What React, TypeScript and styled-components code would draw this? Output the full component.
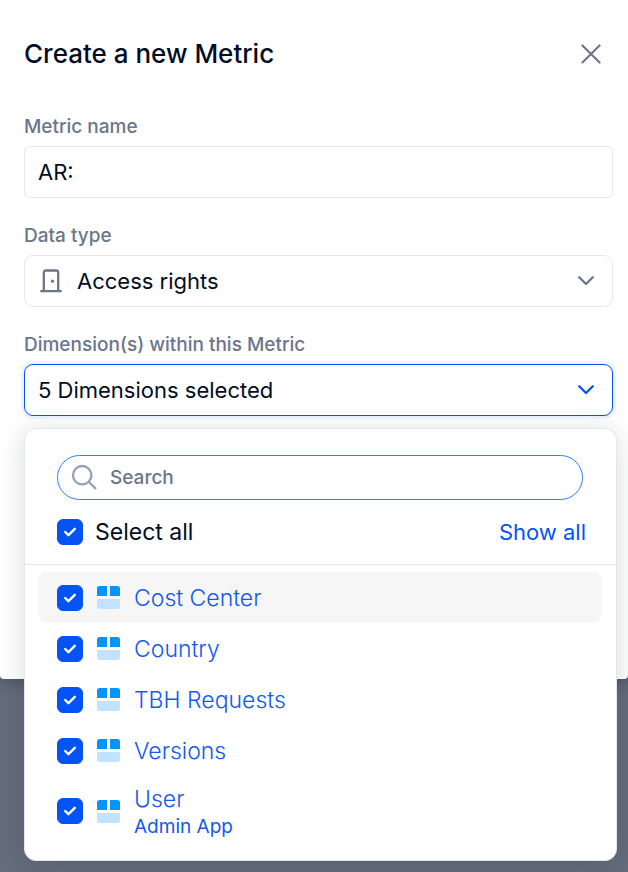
import React, { useState } from "react";
import styled, { createGlobalStyle } from "styled-components";

const color = {
  ink: "#020d24",
  muted: "#6b768a",
  line: "#e6e7ea",
  blue: "#0454f5",
  focus: "#2b84f8",
  link: "#1259ee",
};

const GlobalStyle = createGlobalStyle`
  *, *::before, *::after { box-sizing: border-box; }
  body {
    margin: 0;
    min-height: 100vh;
    background: #656c7b;
    color: ${color.ink};
    font-family: Inter, "Liberation Sans", sans-serif;
  }
  button, input, select { font: inherit; color: inherit; }
`;

const Dialog = styled.main`
  padding: 32px 15px 263px 24px;
  background: #fff;
  border-radius: 0 0 4px 4px;
  box-shadow: 0 4px 14px rgba(20, 28, 48, 0.3);
`;

const Header = styled.header`
  display: flex;
  align-items: center;
  justify-content: space-between;
  height: 44px;
  padding-right: 6px;
  margin-bottom: 39px;
`;

const Title = styled.h1`
  margin: 0;
  font-size: 26px;
  line-height: 32px;
  font-weight: 500;
`;

const IconButton = styled.button`
  display: flex;
  align-items: center;
  justify-content: center;
  width: 32px;
  height: 32px;
  padding: 0;
  border: 0;
  background: none;
  color: ${color.muted};
  cursor: pointer;
`;

const Form = styled.form`
  display: flex;
  flex-direction: column;
  gap: 26px;
`;

const Field = styled.div`
  display: flex;
  flex-direction: column;
  gap: 7px;
`;

const Label = styled.label`
  color: ${color.muted};
  font-size: 19px;
  line-height: 24px;
  font-weight: 500;
`;

const Control = styled.div`
  position: relative;
  display: grid;
  align-items: center;
`;

const TextInput = styled.input`
  width: 100%;
  height: 52px;
  padding: 0 13px;
  border: 1px solid ${color.line};
  border-radius: 5px;
  background: #fff;
  font-size: 22px;
  outline: none;
`;

const Select = styled.select`
  width: 100%;
  height: 52px;
  padding: 0 48px 0 52px;
  border: 1px solid ${color.line};
  border-radius: 9px;
  background: #fff;
  font-size: 22px;
  appearance: none;
`;

const SelectIcon = styled.span<{ $side: "left" | "right" }>`
  position: absolute;
  ${(p) => p.$side}: 14px;
  display: flex;
  color: ${color.muted};
  pointer-events: none;
`;

const Trigger = styled.button`
  display: flex;
  align-items: center;
  justify-content: space-between;
  width: 100%;
  height: 52px;
  padding: 0 13px;
  border: 1px solid ${color.blue};
  border-radius: 9px;
  background: #fff;
  box-shadow: 0 0 0 3px #eef4fe;
  font-size: 22px;
  text-align: left;

  svg { color: ${color.blue}; }
`;

const Panel = styled.section`
  position: absolute;
  top: calc(100% + 12px);
  left: 0;
  right: -4px;
  padding-bottom: 14px;
  border: 1px solid ${color.line};
  border-radius: 12px;
  background: #fff;
  box-shadow: 0 4px 26px rgba(20, 28, 40, 0.16);
`;

const PanelHead = styled.div`
  display: flex;
  flex-direction: column;
  gap: 12px;
  padding: 26px 30px 12px 32px;
  border-bottom: 1px solid ${color.line};
`;

const SearchBox = styled.label`
  display: flex;
  align-items: center;
  gap: 12px;
  height: 45px;
  margin-right: 3px;
  padding: 0 13px;
  border: 1px solid ${color.focus};
  border-radius: 23px;
  color: #97a1b4;
`;

const SearchInput = styled.input`
  flex: 1;
  min-width: 0;
  padding: 0;
  border: 0;
  background: none;
  outline: none;
  color: ${color.ink};
  font-size: 19px;
  line-height: 24px;
  font-weight: 500;

  &::placeholder { color: ${color.muted}; opacity: 1; }
`;

const SelectRow = styled.div`
  display: flex;
  align-items: center;
  justify-content: space-between;
  height: 40px;
`;

const CheckLabel = styled.label`
  display: flex;
  align-items: center;
  gap: 12px;
  font-size: 23px;
  line-height: 28px;
  cursor: pointer;
`;

const ShowAll = styled.button`
  padding: 0;
  border: 0;
  background: none;
  color: ${color.blue};
  font-size: 22px;
  line-height: 28px;
  cursor: pointer;
`;

const Box = styled.span`
  position: relative;
  display: grid;
  flex: none;
  width: 26px;
  height: 26px;

  svg {
    position: absolute;
    inset: 0;
    pointer-events: none;
  }
`;

const BoxInput = styled.input`
  width: 26px;
  height: 26px;
  margin: 0;
  border: 1px solid ${color.blue};
  border-radius: 6px;
  background: #fff;
  appearance: none;

  &:checked { background: ${color.blue}; }
`;

const List = styled.ul`
  margin: 0;
  padding: 7px 14px 0 13px;
  list-style: none;
`;

const Item = styled.label<{ $active: boolean }>`
  display: flex;
  align-items: center;
  gap: 14px;
  min-height: 51px;
  padding: 5px 19px;
  border-radius: 9px;
  background: ${(p) => (p.$active ? "#f6f6f6" : "transparent")};
  color: ${color.link};
  cursor: pointer;
`;

const ItemText = styled.span<{ $twoLine: boolean }>`
  display: flex;
  flex-direction: column;
  padding-top: ${(p) => (p.$twoLine ? 4 : 0)}px;
`;

const ItemName = styled.span`
  font-size: 23px;
  line-height: 28px;
  font-weight: 300;
`;

const ItemNote = styled.span`
  font-size: 19px;
  line-height: 28px;
`;

function CloseIcon() {
  return (
    <svg width="22" height="22" viewBox="0 0 22 22" fill="none" stroke="currentColor" strokeWidth="2.1" strokeLinecap="round" aria-hidden="true">
      <path d="M2.4 2.4 19.6 19.6M19.6 2.4 2.4 19.6" />
    </svg>
  );
}

function DoorIcon() {
  return (
    <svg width="26" height="26" viewBox="0 0 26 26" fill="none" stroke="currentColor" strokeWidth="2.3" strokeLinecap="round" aria-hidden="true">
      <path d="M5.8 23V4.5a2 2 0 0 1 2-2h10.4a2 2 0 0 1 2 2V23M3.2 23.2h19.6" />
      <circle cx="14.5" cy="13.2" r="1.6" fill="currentColor" stroke="none" />
    </svg>
  );
}

function ChevronIcon() {
  return (
    <svg width="26" height="26" viewBox="0 0 26 26" fill="none" stroke="currentColor" strokeWidth="2.3" strokeLinecap="round" strokeLinejoin="round" aria-hidden="true">
      <path d="M6.2 9.2 13 16l6.8-6.8" />
    </svg>
  );
}

function SearchIcon() {
  return (
    <svg width="27" height="27" viewBox="0 0 27 27" fill="none" stroke="currentColor" strokeWidth="2.3" strokeLinecap="round" aria-hidden="true">
      <circle cx="11.2" cy="11.2" r="9.2" />
      <path d="m18 18 6.4 6.4" />
    </svg>
  );
}

function TilesIcon() {
  return (
    <svg width="23" height="23" viewBox="0 0 23 23" aria-hidden="true">
      <path d="M0 10V2.7A2.7 2.7 0 0 1 2.7 0H10v10z" fill="#0494fd" />
      <path d="M13 10V0h7.3A2.7 2.7 0 0 1 23 2.7V10z" fill="#0494fd" />
      <path d="M0 13h23v7.3a2.7 2.7 0 0 1-2.7 2.7H2.7A2.7 2.7 0 0 1 0 20.3z" fill="#c2e3ff" />
    </svg>
  );
}

function Checkbox({ checked, onChange }: { checked: boolean; onChange: () => void }) {
  return (
    <Box>
      <BoxInput type="checkbox" checked={checked} onChange={onChange} />
      {checked && (
        <svg width="26" height="26" viewBox="0 0 26 26" fill="none" stroke="#fff" strokeWidth="2.4" strokeLinecap="round" strokeLinejoin="round" aria-hidden="true">
          <path d="m8.2 13 3.2 3.2 6.4-6.4" />
        </svg>
      )}
    </Box>
  );
}

const dimensions = [
  { name: "Cost Center" },
  { name: "Country" },
  { name: "TBH Requests" },
  { name: "Versions" },
  { name: "User", note: "Admin App" },
];

export default function App() {
  const [metricName, setMetricName] = useState("AR:");
  const [query, setQuery] = useState("");
  const [selected, setSelected] = useState(dimensions.map((d) => d.name));

  const allSelected = selected.length === dimensions.length;
  const toggle = (name: string) =>
    setSelected((now) => (now.includes(name) ? now.filter((n) => n !== name) : [...now, name]));
  const visible = dimensions.filter((d) => d.name.toLowerCase().includes(query.toLowerCase()));

  return (
    <>
      <GlobalStyle />
      <Dialog>
        <Header>
          <Title>Create a new Metric</Title>
          <IconButton type="button" aria-label="Close">
            <CloseIcon />
          </IconButton>
        </Header>
        <Form onSubmit={(e) => e.preventDefault()}>
          <Field>
            <Label htmlFor="metric-name">Metric name</Label>
            <TextInput id="metric-name" value={metricName} onChange={(e) => setMetricName(e.target.value)} />
          </Field>
          <Field>
            <Label htmlFor="data-type">Data type</Label>
            <Control>
              <Select id="data-type" defaultValue="rights">
                <option value="rights">Access rights</option>
              </Select>
              <SelectIcon $side="left">
                <DoorIcon />
              </SelectIcon>
              <SelectIcon $side="right">
                <ChevronIcon />
              </SelectIcon>
            </Control>
          </Field>
          <Field>
            <Label htmlFor="dimensions">Dimension(s) within this Metric</Label>
            <Control>
              <Trigger id="dimensions" type="button" aria-haspopup="true" aria-expanded="true">
                {selected.length} Dimensions selected
                <ChevronIcon />
              </Trigger>
              <Panel>
                <PanelHead>
                  <SearchBox>
                    <SearchIcon />
                    <SearchInput
                      type="text"
                      placeholder="Search"
                      aria-label="Search"
                      value={query}
                      onChange={(e) => setQuery(e.target.value)}
                    />
                  </SearchBox>
                  <SelectRow>
                    <CheckLabel>
                      <Checkbox
                        checked={allSelected}
                        onChange={() => setSelected(allSelected ? [] : dimensions.map((d) => d.name))}
                      />
                      Select all
                    </CheckLabel>
                    <ShowAll type="button">Show all</ShowAll>
                  </SelectRow>
                </PanelHead>
                <List>
                  {visible.map((d, i) => (
                    <li key={d.name}>
                      <Item $active={i === 0}>
                        <Checkbox checked={selected.includes(d.name)} onChange={() => toggle(d.name)} />
                        <TilesIcon />
                        <ItemText $twoLine={Boolean(d.note)}>
                          <ItemName>{d.name}</ItemName>
                          {d.note && <ItemNote>{d.note}</ItemNote>}
                        </ItemText>
                      </Item>
                    </li>
                  ))}
                </List>
              </Panel>
            </Control>
          </Field>
        </Form>
      </Dialog>
    </>
  );
}
